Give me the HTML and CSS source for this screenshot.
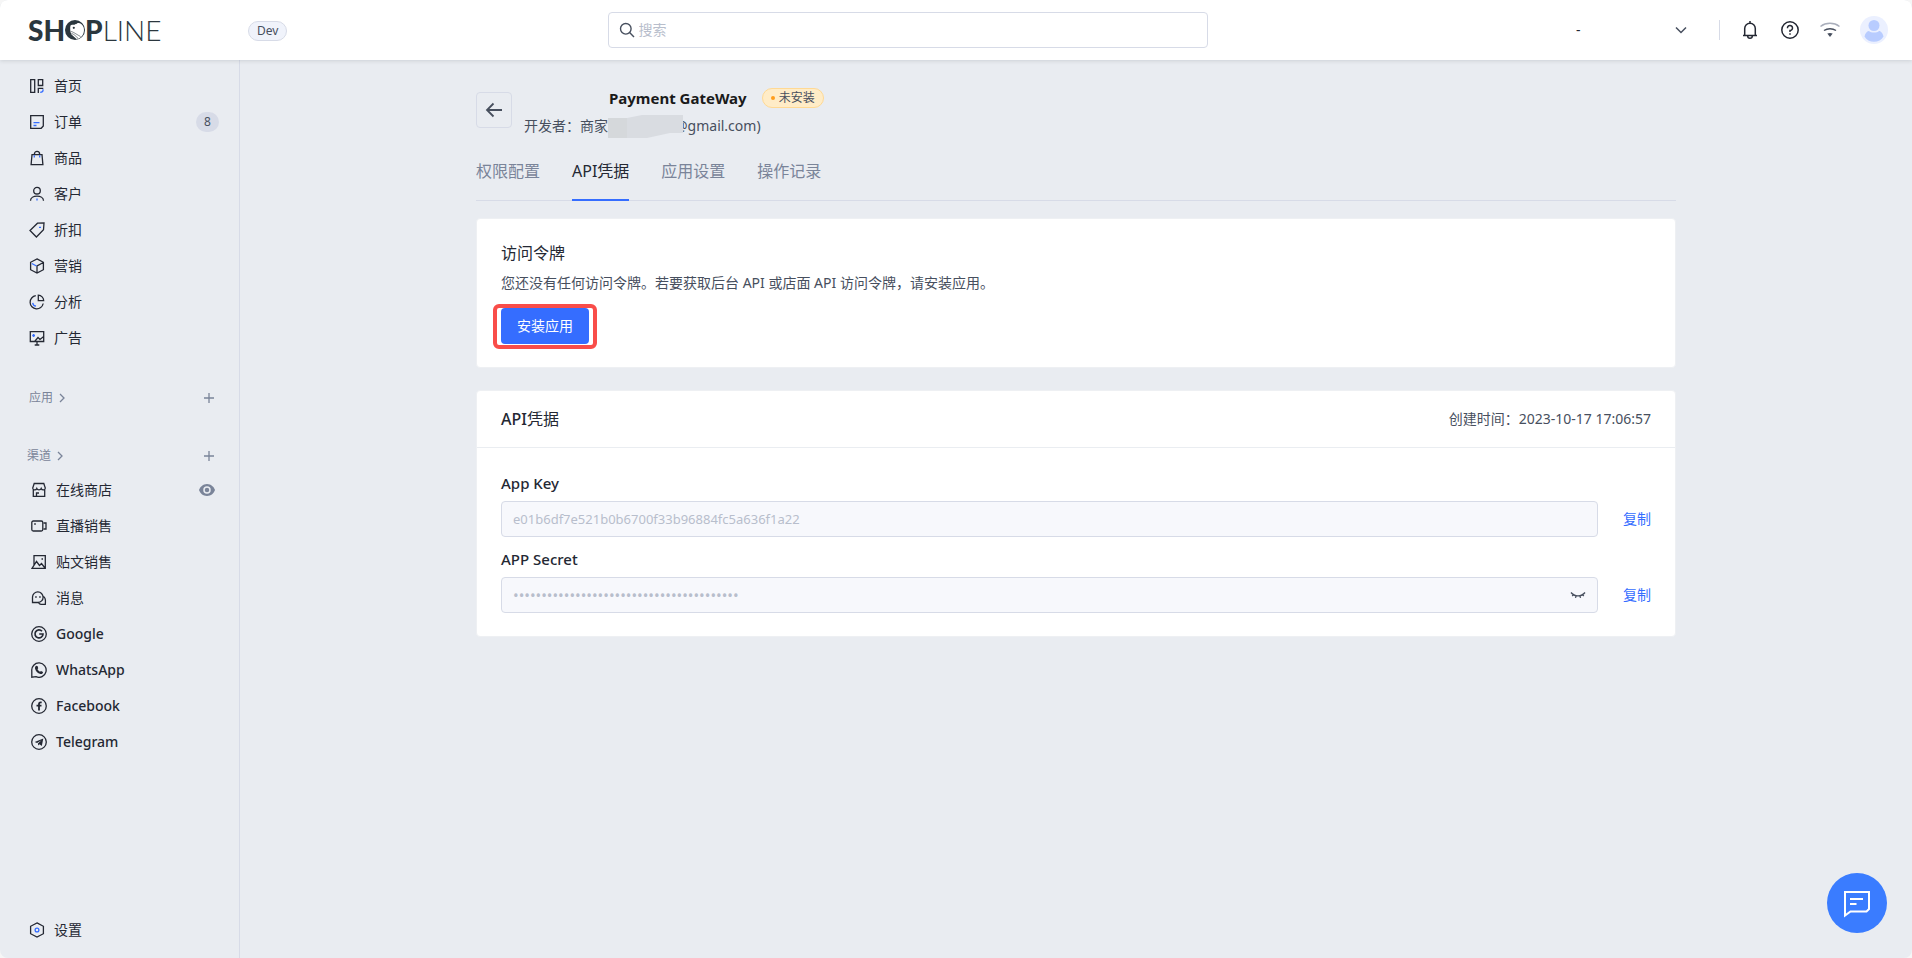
FILE: index.html
```html
<!DOCTYPE html>
<html lang="zh-CN">
<head>
<meta charset="utf-8">
<meta name="viewport" content="width=device-width, initial-scale=1">
<title>SHOPLINE</title>
<link rel="stylesheet" href="styles.css">
</head>
<body>
<div class="app">
  <header class="topbar">
    <a class="logo" href="#" aria-label="SHOPLINE">
      <span class="logo-bold">SH</span>
      <svg class="logo-o" viewBox="0 0 20 20"><circle cx="10" cy="10" r="10" fill="#2b373e"/><path d="M5.500 5.500C7 3.500 10 6 12 3.600C14 2.200 17 4 18.500 7C20 11.500 18 16.500 14 18.500L11.500 19L6.500 14.500C5.200 12 4.800 8 5.500 5.500Z" fill="#fff"/><circle cx="8.800" cy="7.800" r="1.100" fill="#2b373e"/><path d="M6 11.500C8.500 12 10 13.500 15.500 16.500M6.500 13.500C9 14 10.500 16 13 18.300" stroke="#2b373e" stroke-width=".6" fill="none"/></svg>
      <span class="logo-bold">P</span><span class="logo-light">LINE</span>
    </a>
    <div class="env"><span class="env-tag">Dev</span></div>
    <label class="search">
      <svg width="16" height="16" viewBox="0 0 16 16" fill="none" stroke="#474f5e" stroke-width="1.400"><circle cx="6.800" cy="6.800" r="5.300"/><path d="M10.600 10.600L15 15"/></svg>
      <input class="search-input" type="search" placeholder="搜索" aria-label="搜索">
    </label>
    <div class="tools">
      <button class="store-switch" type="button" aria-label="店铺"><span>-</span>
        <svg width="14" height="14" viewBox="0 0 14 14" fill="none" stroke="#474f5e" stroke-width="1.500"><path d="M2 4.500L7 9.500L12 4.500"/></svg>
      </button>
      <span class="divider"></span>
      <button class="tool" type="button" aria-label="通知"><svg viewBox="0 0 20 20" fill="none" stroke="#242833" stroke-width="1.500"><path d="M10 1V3M4.700 15V8.500A5.300 5.300 0 0 1 15.300 8.500V15M3 15.500H17M7.700 16A2.300 2.300 0 0 0 12.300 16"/></svg></button>
      <button class="tool" type="button" aria-label="帮助"><svg viewBox="0 0 20 20" fill="none" stroke="#242833" stroke-width="1.500"><circle cx="10" cy="10" r="8.200"/><path d="M7.500 8.200A2.500 2.500 0 1 1 10 10.500V12M10 13.200V14.700"/></svg></button>
      <button class="tool" type="button" aria-label="网络"><svg viewBox="0 0 20 20" fill="none" stroke-width="1.500"><path d="M.5 6.500C6 2.300 14 2.300 19.500 6.500" stroke="#a9aebb"/><path d="M4 10.500C7.500 8 12.500 8 16 10.500" stroke="#474f5e"/><path d="M7.300 13.600C9 12.800 11 12.800 12.700 13.600L10 17Z" fill="#474f5e"/></svg></button>
      <button class="avatar" type="button" aria-label="账号"><svg viewBox="0 0 28 28"><circle cx="14" cy="14" r="14" fill="#ebf0ff"/><circle cx="14" cy="9.500" r="5.500" fill="#b8ccff"/><path d="M4.500 20.500C5 17 7.500 15 9 15C11 17 17 17 19 15C21 15 23 17.500 23.500 20.500C20 27.500 8 27.500 4.500 20.500Z" fill="#b8ccff"/></svg></button>
    </div>
  </header>

  <div class="body">
    <nav class="sidebar">
      <a class="item" href="#"><svg class="ico" viewBox="0 0 16 16"><path d="M1.700 1.700H5.700V14.300H1.700ZM9.300 1.700H13.700V7.500H9.300ZM9.300 15V10.300H14.300"/><path class="blue" d="M14 11.200V12.500C14 13.700 13 14.300 11.200 14.300"/></svg><span>首页</span></a>
      <a class="item" href="#"><svg class="ico" viewBox="0 0 16 16"><path d="M1.700 1.700H14.300V12L12.200 14.300H1.700Z"/><path class="blue" d="M4.500 8.700H10.500M4.500 11.500H7.500"/></svg><span>订单</span><span class="count">8</span></a>
      <a class="item" href="#"><svg class="ico" viewBox="0 0 16 16"><path d="M3 4.700H13L13.900 14.700H2.100ZM5.300 4.500C5.300 .400 10.700 .400 10.700 4.500"/><path class="blue" d="M5.300 5.300V7.500M10.700 5.300V7.500"/></svg><span>商品</span></a>
      <a class="item" href="#"><svg class="ico" viewBox="0 0 16 16"><circle cx="8" cy="4.700" r="3.300"/><path d="M1.500 14.700C1.500 8.700 14.500 8.700 14.500 14.700"/><path class="blue" d="M8 12.500V14.500"/></svg><span>客户</span></a>
      <a class="item" href="#"><svg class="ico" viewBox="0 0 16 16"><path d="M8.500 1.200L15 1L14.500 7.800L7.400 15L1 8.500Z"/><path class="blue" d="M10 5.300H12"/></svg><span>折扣</span></a>
      <a class="item" href="#"><svg class="ico" viewBox="0 0 16 16"><path d="M8 .900L14.400 4.300V11.700L8 15.100L1.600 11.700V4.300ZM8 15V8L14.400 4.500"/><path class="blue" d="M2.800 5.500L7.500 8"/></svg><span>营销</span></a>
      <a class="item" href="#"><svg class="ico" viewBox="0 0 16 16"><path d="M6.800 1.700A6.600 6.600 0 1 0 14.200 9.500M9.300 1.200V6.700H14.700A5.500 5.500 0 0 0 9.300 1.200Z"/><path class="blue" d="M3.700 8.800A4 4 0 0 0 7 12.200"/></svg><span>分析</span></a>
      <a class="item" href="#"><svg class="ico" viewBox="0 0 16 16"><path d="M5.500 11.500H1.300V1.700H14.700V11.500H5.500L9 7.500L11 9.500L14.700 6.500M8 11.500V15M5.700 15H10.300"/><path class="blue" d="M4.600 4V7M3.200 5.500H6"/></svg><span>广告</span></a>

      <div class="group">
        <a class="group-name" href="#">应用<svg width="10" height="10" viewBox="0 0 10 10"><path d="M3 1L7 5L3 9"/></svg></a>
        <button class="add" type="button" aria-label="添加应用"><svg width="12" height="12" viewBox="0 0 12 12"><path d="M6 1V11M1 6H11"/></svg></button>
      </div>
      <div class="group group-channel">
        <a class="group-name" href="#">渠道<svg width="10" height="10" viewBox="0 0 10 10"><path d="M3 1L7 5L3 9"/></svg></a>
        <button class="add" type="button" aria-label="添加渠道"><svg width="12" height="12" viewBox="0 0 12 12"><path d="M6 1V11M1 6H11"/></svg></button>
      </div>

      <div class="channels">
        <a class="item" href="#"><svg class="ico" viewBox="0 0 16 16"><path d="M3.200 1.500H12.800L14.300 6C14.300 8.500 11 8.500 10.200 6.500C9.500 8.300 6.500 8.300 5.800 6.500C5 8.500 1.700 8.500 1.700 6ZM2.300 8V14.300H13.700V8M5.500 14V11H8"/></svg><span>在线商店</span>
          <svg class="eye" viewBox="0 0 16 12"><path d="M8 0C12 0 15 3 16 6C15 9 12 12 8 12C4 12 1 9 0 6C1 3 4 0 8 0Z" fill="#7a8499"/><circle cx="8" cy="6" r="3" fill="#7a8499" stroke="#e9ecf1" stroke-width="1.500"/></svg></a>
        <a class="item" href="#"><svg class="ico" viewBox="0 0 16 16"><rect x=".8" y="3" width="11" height="10" rx="1.500"/><path d="M12.500 5H15V11H12.500M3.200 6H4.800"/></svg><span>直播销售</span></a>
        <a class="item" href="#"><svg class="ico" viewBox="0 0 16 16"><path d="M3 11V1.700H14.300V14.300H1L5.500 7.500L8.500 11.500L10.500 9.500L14 14M10.500 5H12"/></svg><span>贴文销售</span></a>
        <a class="item" href="#"><svg class="ico" viewBox="0 0 16 16"><path d="M1.500 12.500V7A5.300 5.300 0 1 1 7 12.500ZM12.500 6.500C15.200 8 14.500 10.500 14.300 14.300H10C8.500 14.300 8 13.500 7.500 12.700M4.200 7H5.700M8.200 7H9.700"/></svg><span>消息</span></a>
        <a class="item latin" href="#"><svg class="ico" viewBox="0 0 16 16"><circle cx="8" cy="8" r="7.300"/><path stroke-width="1.700" d="M11 5.300A4 4 0 1 0 12 8H8.200"/></svg><span>Google</span></a>
        <a class="item latin" href="#"><svg class="ico" viewBox="0 0 16 16"><path d="M.8 15.200V9A7.200 7.200 0 1 1 5 14.700Z"/><path fill="#242833" stroke="none" d="M5.300 3.800L6.700 4.300L7.200 6.300L6.500 7.200C7.200 8.500 8 9.200 9 9.700L10 8.900L12 10C12 11.700 10.700 12.300 9.500 12C6.500 11.200 4.500 9 4 6.500C3.900 5.400 4.500 4 5.300 3.800Z"/></svg><span>WhatsApp</span></a>
        <a class="item latin" href="#"><svg class="ico" viewBox="0 0 16 16"><circle cx="8" cy="8" r="7.300"/><path stroke-width="1.800" d="M10.700 4.400H9.700C8.500 4.400 8 5 8 6.200V12.500M5.500 7.700H10.500"/></svg><span>Facebook</span></a>
        <a class="item latin" href="#"><svg class="ico" viewBox="0 0 16 16"><circle cx="8" cy="8" r="7.300"/><path fill="#242833" stroke="none" d="M3.700 8L12.300 4.400L10.800 11.900L8.500 10.300L7.300 11.600L6.900 9.500L10.500 6.200L6 9Z"/></svg><span>Telegram</span></a>
      </div>

      <a class="item item-settings" href="#"><svg class="ico" viewBox="0 0 16 16"><path d="M8 .900L14.400 4.300V11.700L8 15.100L1.600 11.700V4.300Z"/><circle class="blue" cx="8" cy="8" r="1.900"/></svg><span>设置</span></a>
    </nav>

    <main class="main">
      <div class="content">
        <div class="page-head">
          <button class="back" type="button" aria-label="返回"><svg width="18" height="18" viewBox="0 0 18 18" fill="none" stroke="#474f5e" stroke-width="1.800"><path d="M17 9H2M8.500 2.500L2 9L8.500 15.500"/></svg></button>
          <div class="app-info">
            <div class="app-title"><h1>Payment GateWay</h1><span class="status">未安装</span></div>
            <p class="developer">开发者：商家<svg class="mask" viewBox="0 0 75 23" preserveAspectRatio="none"><path d="M0 3H19L34 0H75V18H62L39 23H0Z" fill="#d9dce1"/><path d="M0 3H19V23H0Z" fill="#d5d8db"/></svg>@gmail.com)</p>
          </div>
        </div>

        <nav class="tabs">
          <a href="#">权限配置</a>
          <a class="active" href="#" aria-current="page">API凭据</a>
          <a href="#">应用设置</a>
          <a href="#">操作记录</a>
        </nav>

        <section class="card token-card">
          <h2>访问令牌</h2>
          <p>您还没有任何访问令牌。若要获取后台 API 或店面 API 访问令牌，请安装应用。</p>
          <div class="highlight"><button class="install" type="button">安装应用</button></div>
        </section>

        <section class="card">
          <div class="card-head">
            <h2><span class="latin">API</span>凭据</h2>
            <span class="created">创建时间：2023-10-17 17:06:57</span>
          </div>
          <div class="card-body">
            <label class="field-label" for="app-key">App Key</label>
            <div class="field-row">
              <div class="field"><input id="app-key" class="key-input" type="text" value="e01b6df7e521b0b6700f33b96884fc5a636f1a22" disabled></div>
              <button class="copy" type="button">复制</button>
            </div>
            <label class="field-label" for="app-secret">APP Secret</label>
            <div class="field-row">
              <div class="field"><input id="app-secret" class="secret-input" type="password" value="0000000000000000000000000000000000000000" disabled>
                <button class="reveal" type="button" aria-label="显示"><svg width="16" height="16" viewBox="0 0 16 16" fill="none" stroke="#474f5e" stroke-width="1.300"><path d="M1 5.500C4.500 10 11.500 10 15 5.500M3.500 7.700L2.200 9M12.500 7.700L13.800 9M6 9L5.500 10.800M10 9L10.500 10.800"/></svg></button>
              </div>
              <button class="copy" type="button">复制</button>
            </div>
          </div>
        </section>
      </div>
    </main>
  </div>

  <button class="chat" type="button" aria-label="在线客服"><svg width="30" height="30" viewBox="0 0 30 30" fill="none" stroke="#fff" stroke-width="2"><path d="M3 4H27V21L24.500 23.500H8.500L3 27.500Z"/><path d="M8 11H21M8 16H14.500"/></svg></button>
</div>
</body>
</html>
```

FILE: styles.css
```css
* { box-sizing: border-box; }

body {
  margin: 0;
  background: #f6f6f6;
  color: #242833;
  font: 14px/20px "Noto Sans", "Noto Sans CJK SC", sans-serif;
}

h1, h2, p { margin: 0; }
a { color: inherit; text-decoration: none; }
button { padding: 0; border: 0; background: none; color: inherit; font: inherit; }
svg { display: block; flex: none; }

.app {
  display: flex;
  flex-direction: column;
  min-height: 100vh;
  overflow: hidden;
  border-radius: 8px;
  background: #e9ecf1;
}
.latin { font-weight: 500; }

/* Top bar */
.topbar {
  z-index: 1;
  display: grid;
  grid-template-columns: 240px 12fr minmax(200px, 600px) 23fr;
  align-items: center;
  height: 60px;
  background: #fff;
  box-shadow: 0 1px 4px rgba(36, 40, 51, .14);
}
.logo {
  display: flex;
  align-items: center;
  padding-left: 28px;
  color: #2b373e;
  font: 28px/30px Lato, sans-serif;
}
.logo-bold { font-weight: 900; }
.logo-light { font-weight: 300; }
.logo-o { width: 20px; height: 20px; }
.env { padding-left: 8px; }
.env-tag {
  display: inline-block;
  padding: 0 8px;
  border: 1px solid #d7dbe7;
  border-radius: 10px;
  background: #f0f3fb;
  color: #474f5e;
  font-size: 12px;
  line-height: 18px;
}
.search {
  display: flex;
  align-items: center;
  gap: 4px;
  height: 36px;
  padding: 0 10px;
  border: 1px solid #d7dbe7;
  border-radius: 4px;
}
.search-input {
  flex: 1;
  min-width: 0;
  padding: 0;
  border: 0;
  outline: 0;
  background: none;
  font: inherit;
}
.search-input::placeholder { color: #b8becc; }
.tools {
  display: flex;
  align-items: center;
  justify-content: flex-end;
  gap: 20px;
  padding-right: 24px;
}
.store-switch {
  display: flex;
  align-items: center;
  justify-content: space-between;
  width: 112px;
  margin-right: 11px;
}
.divider { width: 1px; height: 20px; background: #d7dbe7; }
.tool { width: 20px; height: 20px; }
.avatar { width: 28px; height: 28px; }

/* Sidebar */
.body { display: flex; flex: 1; }
.sidebar {
  display: flex;
  flex: none;
  flex-direction: column;
  width: 240px;
  padding: 8px 20px 10px 29px;
  border-right: 1px solid #d7dbe7;
}
.item {
  display: flex;
  align-items: center;
  gap: 9px;
  height: 36px;
}
.ico {
  width: 16px;
  height: 16px;
  fill: none;
  stroke: #242833;
  stroke-width: 1.300;
}
.blue { stroke: #356dff; }
.count {
  width: 23px;
  margin-left: auto;
  border-radius: 10px;
  background: #d7dbe7;
  color: #474f5e;
  font-size: 12px;
  text-align: center;
}
.group {
  display: flex;
  align-items: center;
  justify-content: space-between;
  margin-top: 32px;
  padding-right: 4px;
  color: #7a8499;
  font-size: 12px;
}
.group-channel { margin: 38px 0 6px -2px; }
.group-name { display: flex; align-items: center; gap: 4px; }
.group svg { fill: none; stroke: #7a8499; stroke-width: 1.300; }
.channels { padding-left: 2px; }
.eye { width: 16px; height: 12px; margin: 0 4px 0 auto; }
.item-settings { margin-top: auto; }

/* Page */
.main { flex: 1; min-width: 0; padding: 26px 24px; }
.content { max-width: 1200px; margin: 0 auto; }
.page-head { display: flex; align-items: flex-start; gap: 12px; }
.back {
  display: grid;
  place-items: center;
  width: 36px;
  height: 36px;
  margin-top: 6px;
  border: 1px solid #d7dbe7;
  border-radius: 4px;
}
.app-title { display: flex; align-items: center; gap: 15px; padding-left: 85px; }
.app-title h1 { color: #1a1a1a; font-size: 15px; font-weight: 700; line-height: 24px; }
.status {
  display: flex;
  align-items: center;
  gap: 4px;
  height: 20px;
  padding: 0 8px;
  border: 1px solid #ffd994;
  border-radius: 10px;
  background: #ffecc7;
  color: #474f5e;
  font-size: 12px;
  line-height: 18px;
}
.status::before { width: 4px; height: 4px; border-radius: 50%; background: #ff9d1a; content: ""; }
.developer { display: flex; align-items: center; height: 32px; color: #474f5e; }
.mask { z-index: 1; width: 75px; height: 23px; margin-right: -8px; }

.tabs {
  display: flex;
  gap: 32px;
  margin-top: 17px;
  border-bottom: 1px solid #d7dbe7;
  color: #7a8499;
  font-size: 16px;
  line-height: 24px;
}
.tabs a { margin-bottom: -1px; padding-bottom: 16px; border-bottom: 2px solid transparent; }
.tabs .active { border-color: #356dff; color: #242833; }

.card { margin-top: 22px; border: 1px solid #eef0f3; border-radius: 4px; background: #fff; }
.card h2 { font-size: 16px; font-weight: 400; line-height: 24px; }
.card h2 .latin { font-weight: 500; }
.token-card { margin-top: 17px; padding: 22px 24px 18px; }
.token-card p { margin-top: 8px; color: #474f5e; }
.highlight {
  width: fit-content;
  margin: 11px 0 0 -8px;
  padding: 0 4px 1px;
  border: 4px solid #f94d49;
  border-radius: 6px;
}
.install {
  display: block;
  height: 36px;
  padding: 0 16px;
  border-radius: 4px;
  background: #356dff;
  color: #fff;
}
.card-head {
  display: flex;
  align-items: center;
  justify-content: space-between;
  height: 57px;
  padding: 0 24px;
  border-bottom: 1px solid #eaedf1;
}
.created { color: #474f5e; }
.card-body { padding: 23px 24px; }
.field-label { display: block; font-size: 15px; font-weight: 500; line-height: 24px; }
.field-row { display: flex; align-items: center; gap: 25px; margin-top: 6px; }
.field-row + .field-label { margin-top: 10px; }
.field {
  display: flex;
  flex: 1;
  align-items: center;
  height: 36px;
  padding: 0 11px;
  border: 1px solid #d7dbe7;
  border-radius: 4px;
  background: #f7f8fc;
}
.field input {
  flex: 1;
  min-width: 0;
  padding: 0;
  border: 0;
  background: none;
  color: #b8becc;
  font-family: inherit;
}
.field .key-input { font-size: 13px; }
.field .secret-input { font-size: 15px; }
.copy { color: #356dff; }

.chat {
  position: fixed;
  right: 25px;
  bottom: 25px;
  z-index: 2;
  display: grid;
  place-items: center;
  width: 60px;
  height: 60px;
  border-radius: 50%;
  background: #3a7cff;
}
```
